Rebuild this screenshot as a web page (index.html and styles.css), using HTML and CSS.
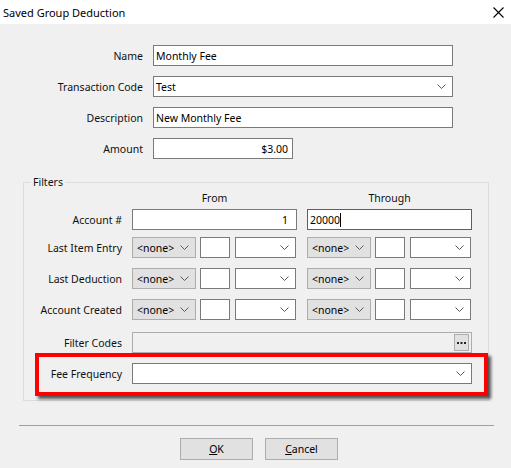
FILE: index.html
```html
<!DOCTYPE html>
<html lang="en">
<head>
    <meta charset="UTF-8">
    <meta name="viewport" content="width=device-width, initial-scale=1.0">
    <title>Saved Group Deduction</title>
    <link rel="stylesheet" href="styles.css">
</head>
<body>
    <div class="titlebar">
        <span class="title">Saved Group Deduction</span>
        <svg class="close" width="11" height="11" viewBox="0 0 11 11">
            <path d="M0.5 0.5 L10.5 10.5 M10.5 0.5 L0.5 10.5" stroke="#000" stroke-width="1.1" fill="none"/>
        </svg>
    </div>

    <div class="dialog">
        <div class="main-form">
            <label>Name</label>
            <div class="field text wide">Monthly Fee</div>

            <label>Transaction Code</label>
            <div class="field text wide combo">
                <span>Test</span>
                <svg class="chev" width="9" height="5" viewBox="0 0 9 5"><polyline points="0.5,0.5 4.5,4.5 8.5,0.5"/></svg>
            </div>

            <label>Description</label>
            <div class="field text wide">New Monthly Fee</div>

            <label>Amount</label>
            <div class="field text amount">$3.00</div>
        </div>

        <fieldset class="filters">
            <legend>Filters</legend>

            <div class="filter-row head">
                <span></span>
                <span class="col-head">From</span>
                <span class="col-head">Through</span>
            </div>

            <div class="filter-row account">
                <label>Account #</label>
                <div class="field text num">1</div>
                <div class="field text focused">20000<span class="caret"></span></div>
            </div>

            <div class="filter-row first-date">
                <label>Last Item Entry</label>
                <div class="date-set">
                    <div class="field none-pick">&lt;none&gt;<svg class="chev" width="9" height="5" viewBox="0 0 9 5"><polyline points="0.5,0.5 4.5,4.5 8.5,0.5"/></svg></div>
                    <div class="field box"></div>
                    <div class="field combo drop"><svg class="chev" width="9" height="5" viewBox="0 0 9 5"><polyline points="0.5,0.5 4.5,4.5 8.5,0.5"/></svg></div>
                </div>
                <div class="date-set">
                    <div class="field none-pick">&lt;none&gt;<svg class="chev" width="9" height="5" viewBox="0 0 9 5"><polyline points="0.5,0.5 4.5,4.5 8.5,0.5"/></svg></div>
                    <div class="field box"></div>
                    <div class="field combo drop"><svg class="chev" width="9" height="5" viewBox="0 0 9 5"><polyline points="0.5,0.5 4.5,4.5 8.5,0.5"/></svg></div>
                </div>
            </div>

            <div class="filter-row date">
                <label>Last Deduction</label>
                <div class="date-set">
                    <div class="field none-pick">&lt;none&gt;<svg class="chev" width="9" height="5" viewBox="0 0 9 5"><polyline points="0.5,0.5 4.5,4.5 8.5,0.5"/></svg></div>
                    <div class="field box"></div>
                    <div class="field combo drop"><svg class="chev" width="9" height="5" viewBox="0 0 9 5"><polyline points="0.5,0.5 4.5,4.5 8.5,0.5"/></svg></div>
                </div>
                <div class="date-set">
                    <div class="field none-pick">&lt;none&gt;<svg class="chev" width="9" height="5" viewBox="0 0 9 5"><polyline points="0.5,0.5 4.5,4.5 8.5,0.5"/></svg></div>
                    <div class="field box"></div>
                    <div class="field combo drop"><svg class="chev" width="9" height="5" viewBox="0 0 9 5"><polyline points="0.5,0.5 4.5,4.5 8.5,0.5"/></svg></div>
                </div>
            </div>

            <div class="filter-row date">
                <label>Account Created</label>
                <div class="date-set">
                    <div class="field none-pick">&lt;none&gt;<svg class="chev" width="9" height="5" viewBox="0 0 9 5"><polyline points="0.5,0.5 4.5,4.5 8.5,0.5"/></svg></div>
                    <div class="field box"></div>
                    <div class="field combo drop"><svg class="chev" width="9" height="5" viewBox="0 0 9 5"><polyline points="0.5,0.5 4.5,4.5 8.5,0.5"/></svg></div>
                </div>
                <div class="date-set">
                    <div class="field none-pick">&lt;none&gt;<svg class="chev" width="9" height="5" viewBox="0 0 9 5"><polyline points="0.5,0.5 4.5,4.5 8.5,0.5"/></svg></div>
                    <div class="field box"></div>
                    <div class="field combo drop"><svg class="chev" width="9" height="5" viewBox="0 0 9 5"><polyline points="0.5,0.5 4.5,4.5 8.5,0.5"/></svg></div>
                </div>
            </div>

            <div class="filter-row codes">
                <label>Filter Codes</label>
                <div class="field codes-box">
                    <span class="dots-btn">
                        <svg width="9" height="2" viewBox="0 0 9 2"><rect x="0" y="0" width="2" height="2"/><rect x="3.5" y="0" width="2" height="2"/><rect x="7" y="0" width="2" height="2"/></svg>
                    </span>
                </div>
            </div>

            <div class="highlight">
                <label>Fee Frequency</label>
                <div class="field combo fee"><svg class="chev" width="9" height="5" viewBox="0 0 9 5"><polyline points="0.5,0.5 4.5,4.5 8.5,0.5"/></svg></div>
            </div>
        </fieldset>

        <div class="divider"></div>

        <div class="buttons">
            <button><u>O</u>K</button>
            <button><u>C</u>ancel</button>
        </div>
    </div>
</body>
</html>
```

FILE: styles.css
```css
body {
    margin: 0;
    width: 511px;
    height: 468px;
    overflow: hidden;
    background-color: #f0f0f0;
    font-family: "Noto Sans", "Open Sans", sans-serif;
    font-size: 10.5px;
    color: #111;
}

.titlebar {
    height: 24px;
    background-color: #fff;
    display: flex;
    align-items: center;
    justify-content: space-between;
    padding: 0 7px 0 3px;
}
.title {
    font-size: 11px;
    color: #000;
}
.close {
    display: block;
}

.dialog {
    padding-top: 21px;
}

/* plain fields */
.field {
    box-sizing: border-box;
    height: 21px;
    border: 1px solid #7a7a7a;
    background-color: #fff;
    display: flex;
    align-items: center;
    padding: 0 2px;
    color: #000;
    white-space: nowrap;
}
.combo {
    justify-content: space-between;
    padding-right: 6px;
}
.chev {
    display: block;
    fill: none;
    stroke: #5a5a5a;
    stroke-width: 1;
}
.drop,
.fee {
    justify-content: flex-end;
}

.main-form {
    display: grid;
    grid-template-columns: 143px auto;
    column-gap: 10px;
    row-gap: 10px;
    align-items: center;
}
.main-form label {
    text-align: right;
}
.wide {
    width: 300px;
}
.amount {
    width: 140px;
    justify-content: flex-end;
    padding-right: 4px;
}

/* filters group */
.filters {
    box-sizing: border-box;
    width: 466px;
    margin: 15px 0 0 23px;
    padding: 0 0 4px 0;
    border: 1px solid #dcdcdc;
}
.filters legend {
    margin-left: 7px;
    padding: 0 2px;
    line-height: 16px;
}

.filter-row {
    display: grid;
    grid-template-columns: 98px 165px 165px;
    column-gap: 10px;
    align-items: center;
}
.filter-row label {
    text-align: right;
}
.head {
    height: 16px;
}
.col-head {
    text-align: center;
}
.account {
    margin-top: 3px;
}
.first-date {
    margin-top: 7px;
}
.date {
    margin-top: 10px;
}
.codes {
    margin-top: 12px;
    grid-template-columns: 98px 340px;
}

.num {
    justify-content: flex-end;
    padding-right: 8px;
}
.focused {
    border-color: #0078d7;
}
.caret {
    display: inline-block;
    width: 1px;
    height: 14px;
    background-color: #000;
}

.date-set {
    display: flex;
}
.none-pick {
    width: 64px;
    background-color: #e1e1e1;
    border-color: #adadad;
    justify-content: space-between;
    padding: 0 6px 0 4px;
}
.box {
    width: 30px;
    margin-left: 4px;
}
.drop {
    width: 61px;
    margin-left: 5px;
    padding-right: 6px;
}

.codes-box {
    background-color: #f0f0f0;
    border-color: #adadad;
    justify-content: flex-end;
    padding-right: 2px;
}
.dots-btn {
    box-sizing: border-box;
    width: 15px;
    height: 17px;
    background-color: #e1e1e1;
    border: 1px solid #adadad;
    display: flex;
    align-items: center;
    justify-content: center;
    padding-top: 1px;
}
.dots-btn svg {
    display: block;
    fill: #222;
}

/* red highlight round the fee row */
.highlight {
    margin-left: 11px;
    border: 4px solid #ff0000;
    padding: 6px 12px 8px 0;
    display: grid;
    grid-template-columns: 83px 340px;
    column-gap: 10px;
    align-items: center;
    box-shadow: 3px 3px 3px rgba(0, 0, 0, 0.65);
}
.highlight label {
    text-align: right;
}

.divider {
    height: 1px;
    width: 475px;
    margin: 24px 0 0 19px;
    background-color: #a0a0a0;
}

.buttons {
    display: flex;
    justify-content: center;
    gap: 12px;
    margin-top: 12px;
    padding-left: 7px;
}
.buttons button {
    width: 73px;
    height: 22px;
    background-color: #e1e1e1;
    border: 1px solid #adadad;
    font-family: inherit;
    font-size: 10.5px;
    color: #000;
    padding: 0;
}
```
